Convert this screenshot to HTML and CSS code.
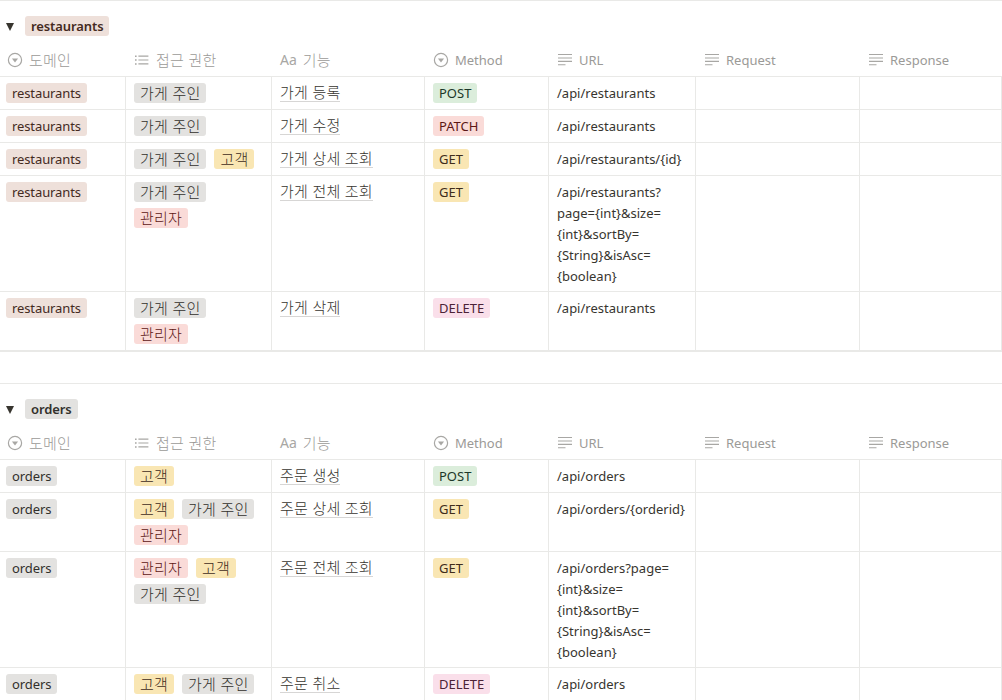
FILE: index.html
```html
<!DOCTYPE html>
<html lang="ko">
<head>
<meta charset="utf-8">
<title>API</title>
<link rel="stylesheet" href="styles.css">
</head>
<body>
<svg class="defs" width="0" height="0" aria-hidden="true">
  <symbol id="i-select" viewBox="0 0 16 16"><circle cx="8" cy="8" r="6.6" fill="none" stroke="currentColor" stroke-width="1.2"/><path d="M4.9 6.4h6.2L8 10.4z" fill="currentColor"/></symbol>
  <symbol id="i-multi" viewBox="0 0 16 16"><path d="M1 3.4h1.6v1.5H1zM1 7.3h1.6v1.5H1zM1 11.2h1.6v1.5H1zM4.4 3.5h10v1.2h-10zM4.4 7.4h10v1.2h-10zM4.4 11.3h10v1.2h-10z" fill="currentColor"/></symbol>
  <symbol id="i-text" viewBox="0 0 16 16"><path d="M1 2h14v1.1H1zM1 5.4h14v1.1H1zM1 8.8h14v1.1H1zM1 12.2h7.5v1.1H1z" fill="currentColor"/></symbol>
</svg>

<section class="group">
  <div class="group-head"><span class="caret"></span><span class="tag brown strong">restaurants</span></div>
  <div class="row head">
    <div class="th"><svg class="ic"><use href="#i-select"/></svg><span class="ko">도메인</span></div>
    <div class="th"><svg class="ic"><use href="#i-multi"/></svg><span class="ko">접근 권한</span></div>
    <div class="th"><span class="aa">Aa</span><span class="ko">기능</span></div>
    <div class="th"><svg class="ic"><use href="#i-select"/></svg>Method</div>
    <div class="th"><svg class="ic"><use href="#i-text"/></svg>URL</div>
    <div class="th"><svg class="ic"><use href="#i-text"/></svg>Request</div>
    <div class="th"><svg class="ic"><use href="#i-text"/></svg>Response</div>
  </div>
  <div class="row">
    <div class="td"><span class="tag brown">restaurants</span></div>
    <div class="td tags"><span class="tag gray ko">가게 주인</span></div>
    <div class="td"><span class="name ko">가게 등록</span></div>
    <div class="td"><span class="tag green">POST</span></div>
    <div class="td url">/api/restaurants</div>
    <div class="td"></div><div class="td"></div>
  </div>
  <div class="row">
    <div class="td"><span class="tag brown">restaurants</span></div>
    <div class="td tags"><span class="tag gray ko">가게 주인</span></div>
    <div class="td"><span class="name ko">가게 수정</span></div>
    <div class="td"><span class="tag red">PATCH</span></div>
    <div class="td url">/api/restaurants</div>
    <div class="td"></div><div class="td"></div>
  </div>
  <div class="row">
    <div class="td"><span class="tag brown">restaurants</span></div>
    <div class="td tags"><span class="tag gray ko">가게 주인</span><span class="tag yellow ko">고객</span></div>
    <div class="td"><span class="name ko">가게 상세 조회</span></div>
    <div class="td"><span class="tag yellow">GET</span></div>
    <div class="td url">/api/restaurants/{id}</div>
    <div class="td"></div><div class="td"></div>
  </div>
  <div class="row">
    <div class="td"><span class="tag brown">restaurants</span></div>
    <div class="td tags"><span class="tag gray ko">가게 주인</span><span class="tag red ko">관리자</span></div>
    <div class="td"><span class="name ko">가게 전체 조회</span></div>
    <div class="td"><span class="tag yellow">GET</span></div>
    <div class="td url">/api/restaurants?page={int}&amp;size={int}&amp;sortBy={String}&amp;isAsc={boolean}</div>
    <div class="td"></div><div class="td"></div>
  </div>
  <div class="row last">
    <div class="td"><span class="tag brown">restaurants</span></div>
    <div class="td tags"><span class="tag gray ko">가게 주인</span><span class="tag red ko">관리자</span></div>
    <div class="td"><span class="name ko">가게 삭제</span></div>
    <div class="td"><span class="tag pink">DELETE</span></div>
    <div class="td url">/api/restaurants</div>
    <div class="td"></div><div class="td"></div>
  </div>
</section>

<section class="group second">
  <div class="group-head"><span class="caret"></span><span class="tag gray strong">orders</span></div>
  <div class="row head">
    <div class="th"><svg class="ic"><use href="#i-select"/></svg><span class="ko">도메인</span></div>
    <div class="th"><svg class="ic"><use href="#i-multi"/></svg><span class="ko">접근 권한</span></div>
    <div class="th"><span class="aa">Aa</span><span class="ko">기능</span></div>
    <div class="th"><svg class="ic"><use href="#i-select"/></svg>Method</div>
    <div class="th"><svg class="ic"><use href="#i-text"/></svg>URL</div>
    <div class="th"><svg class="ic"><use href="#i-text"/></svg>Request</div>
    <div class="th"><svg class="ic"><use href="#i-text"/></svg>Response</div>
  </div>
  <div class="row">
    <div class="td"><span class="tag gray">orders</span></div>
    <div class="td tags"><span class="tag yellow ko">고객</span></div>
    <div class="td"><span class="name ko">주문 생성</span></div>
    <div class="td"><span class="tag green">POST</span></div>
    <div class="td url">/api/orders</div>
    <div class="td"></div><div class="td"></div>
  </div>
  <div class="row">
    <div class="td"><span class="tag gray">orders</span></div>
    <div class="td tags"><span class="tag yellow ko">고객</span><span class="tag gray ko">가게 주인</span><span class="tag red ko">관리자</span></div>
    <div class="td"><span class="name ko">주문 상세 조회</span></div>
    <div class="td"><span class="tag yellow">GET</span></div>
    <div class="td url">/api/orders/{orderid}</div>
    <div class="td"></div><div class="td"></div>
  </div>
  <div class="row">
    <div class="td"><span class="tag gray">orders</span></div>
    <div class="td tags"><span class="tag red ko">관리자</span><span class="tag yellow ko">고객</span><span class="tag gray ko">가게 주인</span></div>
    <div class="td"><span class="name ko">주문 전체 조회</span></div>
    <div class="td"><span class="tag yellow">GET</span></div>
    <div class="td url">/api/orders?page={int}&amp;size={int}&amp;sortBy={String}&amp;isAsc={boolean}</div>
    <div class="td"></div><div class="td"></div>
  </div>
  <div class="row">
    <div class="td"><span class="tag gray">orders</span></div>
    <div class="td tags"><span class="tag yellow ko">고객</span><span class="tag gray ko">가게 주인</span></div>
    <div class="td"><span class="name ko">주문 취소</span></div>
    <div class="td"><span class="tag pink">DELETE</span></div>
    <div class="td url">/api/orders</div>
    <div class="td"></div><div class="td"></div>
  </div>
</section>
</body>
</html>
```

FILE: styles.css
```css
* { box-sizing: border-box; }
html, body { margin: 0; height: 700px; overflow: hidden; background: #fff; }
body {
  font-family: "Noto Sans", "Noto Sans CJK KR", sans-serif;
  font-size: 13px;
  color: #37352f;
}
.defs { position: absolute; }
.group { border-top: 1px solid #e9e9e7; }
.second { margin-top: 31px; }
.group-head { height: 43px; padding: 15px 0 0 6px; display: flex; align-items: flex-start; }
.caret {
  width: 0; height: 0; margin: 7px 11px 0 0;
  border-left: 4px solid transparent; border-right: 4px solid transparent;
  border-top: 8px solid #37352f;
}
.row {
  display: grid;
  grid-template-columns: 126px 146px 153px 124px 147px 164px 142px;
  border-bottom: 1px solid #e9e9e7;
}
.row.last { border-bottom-width: 2px; }
.head { height: 33px; }
.th {
  display: flex; align-items: center; gap: 6px;
  padding: 0 0 0 7px;
  color: #9b9a97;
  line-height: 32px;
}
.th:nth-child(n+2) { padding-left: 8px; }
.ic { width: 16px; height: 16px; flex: none; color: #a8a7a4; }
.aa { font-size: 14px; color: #a8a7a4; }
.td {
  border-right: 1px solid #e9e9e7;
  padding: 6px 8px;
  line-height: 20px;
}
.td:first-child { padding-left: 6px; }
.tags { display: flex; flex-wrap: wrap; column-gap: 8px; row-gap: 6px; align-content: flex-start; }
.tag {
  display: inline-block;
  height: 20px;
  line-height: 20px;
  padding: 0 6px;
  border-radius: 3px;
  white-space: nowrap;
  vertical-align: top;
}
.strong { font-weight: 600; }
.brown { background: #eee0da; color: #442a1e; letter-spacing: -0.1px; }
.gray { background: #e3e2e0; color: #32302c; letter-spacing: -0.1px; }
.yellow { background: #f9e6b3; color: #402c1b; }
.red { background: #fadbd8; color: #5d1715; }
.green { background: #dbeddb; color: #1c3829; }
.pink { background: #fadfea; color: #4c2337; }
.name {
  display: inline-block;
  line-height: 18px;
  border-bottom: 1px solid #d7d6d5;
  vertical-align: top;
}
.url { line-height: 21px; padding-top: 6px; padding-bottom: 4px; }
.ko { font-family: "Noto Sans CJK KR", sans-serif; font-size: 15px; letter-spacing: 0.2px; font-weight: 300; }
```
